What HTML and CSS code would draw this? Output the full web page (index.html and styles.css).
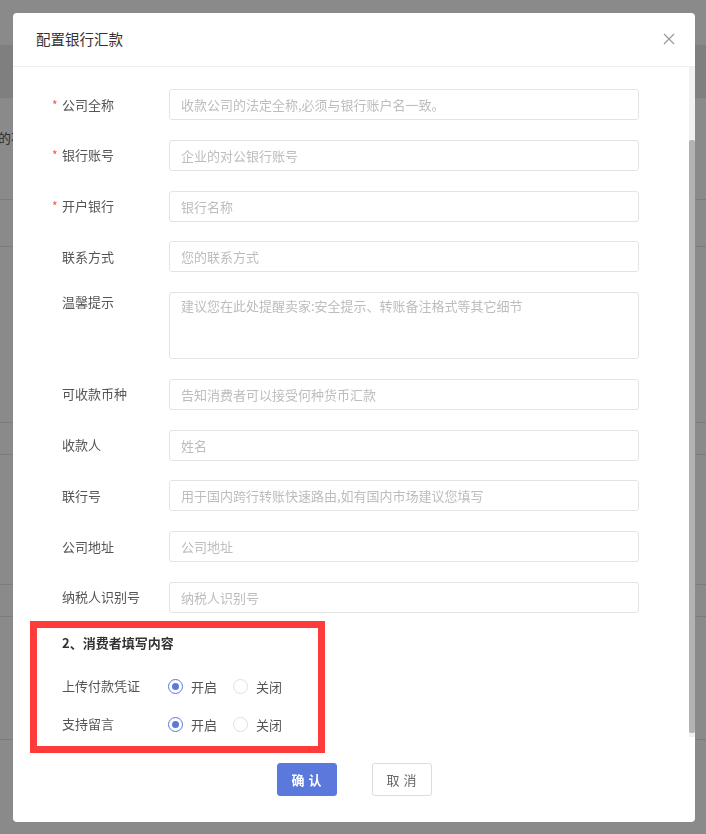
FILE: index.html
```html
<!DOCTYPE html>
<html lang="zh-CN">
<head>
<meta charset="utf-8">
<title>配置银行汇款</title>
<link rel="stylesheet" href="styles.css">
</head>
<body>
<div class="page">
  <div class="page-band"></div>
  <div class="page-row page-row-a"><span class="page-text">的不</span></div>
  <div class="page-row page-row-b"></div>
  <div class="page-row page-row-c"></div>
  <div class="page-row page-row-d"></div>
  <div class="page-row page-row-e"></div>
  <div class="page-row page-row-f"></div>
  <div class="page-row page-row-g"></div>
</div>

<div class="mask">
  <div class="modal">
    <div class="modal-header">
      <span class="modal-title">配置银行汇款</span>
      <button class="modal-close" type="button" aria-label="关闭">
        <svg width="12" height="12" viewBox="0 0 12 12"><path d="M1 1 L11 11 M11 1 L1 11" stroke="#9a9a9a" stroke-width="1.2" fill="none"/></svg>
      </button>
    </div>

    <div class="modal-body">
      <div class="form">
        <div class="form-row">
          <label class="form-label"><span class="req">*</span>公司全称</label>
          <input class="input" type="text" placeholder="收款公司的法定全称,必须与银行账户名一致。">
        </div>
        <div class="form-row">
          <label class="form-label"><span class="req">*</span>银行账号</label>
          <input class="input" type="text" placeholder="企业的对公银行账号">
        </div>
        <div class="form-row">
          <label class="form-label"><span class="req">*</span>开户银行</label>
          <input class="input" type="text" placeholder="银行名称">
        </div>
        <div class="form-row">
          <label class="form-label"><span class="req-space"></span>联系方式</label>
          <input class="input" type="text" placeholder="您的联系方式">
        </div>
        <div class="form-row form-row-top">
          <label class="form-label"><span class="req-space"></span>温馨提示</label>
          <textarea class="textarea" placeholder="建议您在此处提醒卖家:安全提示、转账备注格式等其它细节"></textarea>
        </div>
        <div class="form-row">
          <label class="form-label"><span class="req-space"></span>可收款币种</label>
          <input class="input" type="text" placeholder="告知消费者可以接受何种货币汇款">
        </div>
        <div class="form-row">
          <label class="form-label"><span class="req-space"></span>收款人</label>
          <input class="input" type="text" placeholder="姓名">
        </div>
        <div class="form-row">
          <label class="form-label"><span class="req-space"></span>联行号</label>
          <input class="input" type="text" placeholder="用于国内跨行转账快速路由,如有国内市场建议您填写">
        </div>
        <div class="form-row">
          <label class="form-label"><span class="req-space"></span>公司地址</label>
          <input class="input" type="text" placeholder="公司地址">
        </div>
        <div class="form-row">
          <label class="form-label"><span class="req-space"></span>纳税人识别号</label>
          <input class="input" type="text" placeholder="纳税人识别号">
        </div>

        <div class="section-title">2、消费者填写内容</div>

        <div class="radio-row radio-row-first">
          <span class="form-label"><span class="req-space"></span>上传付款凭证</span>
          <div class="radio-group">
            <span class="radio"><span class="radio-dot radio-on"></span><span class="radio-text">开启</span></span>
            <span class="radio"><span class="radio-dot"></span><span class="radio-text">关闭</span></span>
          </div>
        </div>
        <div class="radio-row radio-row-second">
          <span class="form-label"><span class="req-space"></span>支持留言</span>
          <div class="radio-group">
            <span class="radio"><span class="radio-dot radio-on"></span><span class="radio-text">开启</span></span>
            <span class="radio"><span class="radio-dot"></span><span class="radio-text">关闭</span></span>
          </div>
        </div>
      </div>
    </div>

    <div class="modal-footer">
      <button class="btn btn-primary" type="button">确认</button>
      <button class="btn btn-default" type="button">取消</button>
    </div>

    <div class="scrollbar"><div class="scrollbar-thumb"></div></div>
    <div class="annotation"></div>
  </div>
</div>
</body>
</html>
```

FILE: styles.css
```css
* { box-sizing: border-box; }

html, body {
  margin: 0;
  padding: 0;
}

body {
  width: 706px;
  height: 834px;
  overflow: hidden;
  background: #8a8a8a;
  font-family: "Noto Sans CJK SC", "Noto Sans", "Liberation Sans", sans-serif;
  font-size: 13px;
  color: #555;
}

/* underlying page (dimmed) */
.page {
  padding-top: 45px;
}
.page-band {
  height: 53px;
  background: #7f7f7f;
}
.page-row {
  border-bottom: 1px solid #7c7c7c;
}
.page-row-a { height: 102px; padding-top: 30px; }
.page-row-b { height: 47px; }
.page-row-c { height: 176px; }
.page-row-d { height: 32px; }
.page-row-e { height: 130px; }
.page-row-f { height: 32px; }
.page-row-g { height: 123px; }
.page-text {
  display: inline-block;
  margin-left: -2px;
  color: #2c2c2c;
  font-size: 13px;
  line-height: 18px;
}

/* overlay */
.mask {
  position: fixed;
  inset: 0;
}

.modal {
  position: absolute;
  left: 13px;
  top: 13px;
  width: 682px;
  height: 809px;
  background: #fff;
  border-radius: 4px;
  display: flex;
  flex-direction: column;
}

.modal-header {
  height: 54px;
  flex-shrink: 0;
  border-bottom: 1px solid #eeeeee;
  display: flex;
  align-items: center;
  justify-content: space-between;
  padding: 0 20px 2px 23px;
}
.modal-title {
  font-size: 14.5px;
  color: #333;
}
.modal-close {
  border: 0;
  background: none;
  padding: 0;
  width: 12px;
  height: 12px;
  display: flex;
}

.modal-body {
  height: 670px;
  flex-shrink: 0;
  overflow-y: auto;
  display: flex;
  flex-direction: column-reverse;
  scrollbar-width: none;
}
.modal-body::-webkit-scrollbar { display: none; }

/* scrollbar drawn over the right edge of the body */
.scrollbar {
  position: absolute;
  right: 0;
  top: 54px;
  width: 6px;
  height: 670px;
  background: #f1f1f1;
}
.scrollbar-thumb {
  margin-top: 73px;
  height: 593px;
  background: #b3b3b3;
  border-radius: 2px;
}

.form {
  flex-shrink: 0;
  padding: 105px 0 1px 37px;
}

.section-title {
  font-weight: bold;
  color: #333;
  font-size: 13px;
  line-height: 20px;
  padding-left: 12px;
  margin-top: 20.25px;
}

.form-row {
  display: grid;
  grid-template-columns: 119px 470px;
  align-items: center;
}
.form-row + .form-row { margin-top: 19.75px; }
.form-row-top { align-items: start; }

.form-label {
  font-size: 13px;
  color: #555;
  line-height: 20px;
  white-space: nowrap;
}

.req, .req-space {
  display: inline-block;
  width: 12px;
  padding-left: 2px;
  color: #f05454;
  font-size: 12px;
}

.input, .textarea {
  width: 470px;
  border: 1px solid #e3e3e3;
  border-radius: 3px;
  font-family: "Noto Sans CJK SC", "Noto Sans", "Liberation Sans", sans-serif;
  font-size: 13px;
  color: #333;
  padding: 0 11px;
  background: #fff;
  outline: none;
  margin: 0;
}
.input { height: 31px; }
.textarea {
  height: 67px;
  padding-top: 4px;
  resize: none;
  line-height: 18px;
}
.input::placeholder, .textarea::placeholder { color: #bdbdbd; }

.radio-row {
  display: grid;
  grid-template-columns: 119px auto;
  align-items: center;
  height: 24px;
}
.radio-row-first { margin-top: 21px; }
.radio-row-second { margin-top: 14px; }

.radio-group {
  display: flex;
  align-items: center;
  margin-left: -1px;
}
.radio {
  display: inline-flex;
  align-items: center;
  margin-right: 16px;
}
.radio-dot {
  width: 15px;
  height: 15px;
  border-radius: 50%;
  border: 1px solid #dedede;
  background: #fff;
  display: inline-flex;
  align-items: center;
  justify-content: center;
}
.radio-on { border-color: #5b78dc; }
.radio-on::after {
  content: "";
  width: 7px;
  height: 7px;
  border-radius: 50%;
  background: #5b78dc;
}
.radio-text {
  margin-left: 8px;
  font-size: 13px;
  color: #555;
}

.modal-footer {
  flex: 1;
  display: flex;
  justify-content: center;
  gap: 35px;
  padding-top: 26px;
}
.btn {
  width: 60px;
  height: 33px;
  border-radius: 3px;
  font-family: "Noto Sans CJK SC", "Noto Sans", "Liberation Sans", sans-serif;
  font-size: 13px;
  letter-spacing: 4px;
  padding: 0 0 0 4px;
  cursor: pointer;
}
.btn-primary {
  background: #5b78dc;
  border: 1px solid #5b78dc;
  color: #fff;
  font-weight: bold;
}
.btn-default {
  background: #fff;
  border: 1px solid #dcdcdc;
  color: #666;
}

/* red highlight annotation drawn over the screenshot */
.annotation {
  position: absolute;
  left: 17px;
  top: 608px;
  width: 295px;
  height: 132px;
  border: 7px solid #ff3c3c;
  pointer-events: none;
}
```
